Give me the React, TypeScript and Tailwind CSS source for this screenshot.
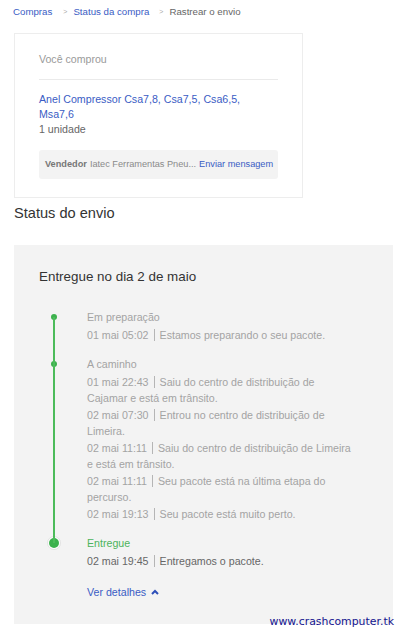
import React from "react";

const Sep = () => (
  <span className="inline-block w-px h-[12px] bg-[#b5b5b5] mx-[5px] align-[-2px]" />
);

type Item = { t: string; d: string };

function Group({
  label,
  items,
  final,
  className,
}: {
  label: string;
  items: Item[];
  final?: boolean;
  className?: string;
}) {
  return (
    <div className={"flex " + (className ?? "")}>
      <div className="w-[30px] shrink-0 flex justify-center">
        {final ? (
          <div className="mt-[1px] w-[14px] h-[14px] rounded-full bg-white border border-[#e2e2e2] flex items-center justify-center">
            <div className="w-[10px] h-[10px] rounded-full bg-[#3cb14d]" />
          </div>
        ) : (
          <div className="mt-[5px] w-[6px] h-[6px] rounded-full bg-[#3cb14d]" />
        )}
      </div>
      <div className="ml-[18px] w-[268px] text-[10.65px] leading-[16px]">
        <div className={final ? "text-[#4cb35b]" : "text-[#a3a3a3]"}>{label}</div>
        <div className="mt-[2px] flex flex-col gap-[1px]">
          {items.map((it, i) => (
            <div key={i} className={final ? "text-[#666666]" : "text-[#a3a3a3]"}>
              <span>{it.t}</span>
              <Sep />
              <span>{it.d}</span>
            </div>
          ))}
        </div>
      </div>
    </div>
  );
}

export default function App() {
  return (
    <div
      className="relative w-[407px] h-[640px] bg-white px-[14px] overflow-hidden"
      style={{ fontFamily: '"Liberation Sans", Arial, sans-serif' }}
    >
      {/* Breadcrumb */}
      <div className="flex items-center h-[14px] mt-[5px] text-[9.7px] leading-[14px] -ml-[1px]">
        <span className="text-[#3a5cc4]">Compras</span>
        <span className="ml-[11px] mr-[6px] text-[7px] text-[#aaaaaa]">&gt;</span>
        <span className="text-[#3a5cc4]">Status da compra</span>
        <span className="ml-[10px] mr-[6px] text-[7px] text-[#aaaaaa]">&gt;</span>
        <span className="text-[#666666]">Rastrear o envio</span>
      </div>

      {/* Purchase card */}
      <div className="mt-[14px] w-[289px] border border-[#ededed] px-[24px] pt-[18px] pb-[18px]">
        <div className="text-[10.6px] leading-[15px] text-[#9a9a9a]">Você comprou</div>
        <div className="mt-[12px] h-px bg-[#eaeaea]" />
        <div className="mt-[12px] text-[10.65px] leading-[15px] text-[#3a5cc4]">
          Anel Compressor Csa7,8, Csa7,5, Csa6,5,
          <br />
          Msa7,6
        </div>
        <div className="text-[10.65px] leading-[15px] text-[#666666]">1 unidade</div>
        <div className="mt-[13px] h-[29px] rounded-[3px] bg-[#f3f3f3] px-[6px] flex items-center text-[9.2px] whitespace-nowrap">
          <span className="font-bold text-[#777777]">Vendedor</span>
          <span className="ml-[3px] text-[#8a8a8a]">Iatec Ferramentas Pneu...</span>
          <span className="ml-[3px] text-[#3a5cc4]">Enviar mensagem</span>
        </div>
      </div>

      {/* Status heading */}
      <div className="mt-[5px] text-[14.6px] leading-[20px] text-[#333333]">Status do envio</div>

      {/* Tracking panel */}
      <div className="mt-[22px] w-[379px] bg-[#f3f3f3] px-[25px] pt-[23px] pb-[24px]">
        <div className="text-[13.4px] leading-[18px] text-[#333333]">Entregue no dia 2 de maio</div>

        <div className="relative mt-[23px]">
          <div className="absolute left-[14px] top-[8px] bottom-[26px] w-[2px] bg-[#4cbb5a]" />
          <Group
            label="Em preparação"
            items={[{ t: "01 mai 05:02", d: "Estamos preparando o seu pacote." }]}
          />
          <Group
            className="mt-[13px]"
            label="A caminho"
            items={[
              { t: "01 mai 22:43", d: "Saiu do centro de distribuição de Cajamar e está em trânsito." },
              { t: "02 mai 07:30", d: "Entrou no centro de distribuição de Limeira." },
              { t: "02 mai 11:11", d: "Saiu do centro de distribuição de Limeira e está em trânsito." },
              { t: "02 mai 11:11", d: "Seu pacote está na última etapa do percurso." },
              { t: "02 mai 19:13", d: "Seu pacote está muito perto." },
            ]}
          />
          <Group
            className="mt-[13px]"
            final
            label="Entregue"
            items={[{ t: "02 mai 19:45", d: "Entregamos o pacote." }]}
          />
        </div>

        <div className="mt-[15px] ml-[48px] flex items-center text-[10.65px] leading-[16px] text-[#3a5cc4]">
          <span>Ver detalhes</span>
          <svg className="ml-[5px]" width="8" height="6" viewBox="0 0 8 6">
            <polyline points="1,5 4,2 7,5" fill="none" stroke="#2d4fb8" strokeWidth="2" />
          </svg>
        </div>
      </div>

      {/* Watermark */}
      <div
        className="absolute right-[13px] top-[614px] text-[10.9px] leading-[16px] text-[#13138f]"
        style={{ fontFamily: '"DejaVu Sans", Verdana, sans-serif' }}
      >
        www.crashcomputer.tk
      </div>
    </div>
  );
}
